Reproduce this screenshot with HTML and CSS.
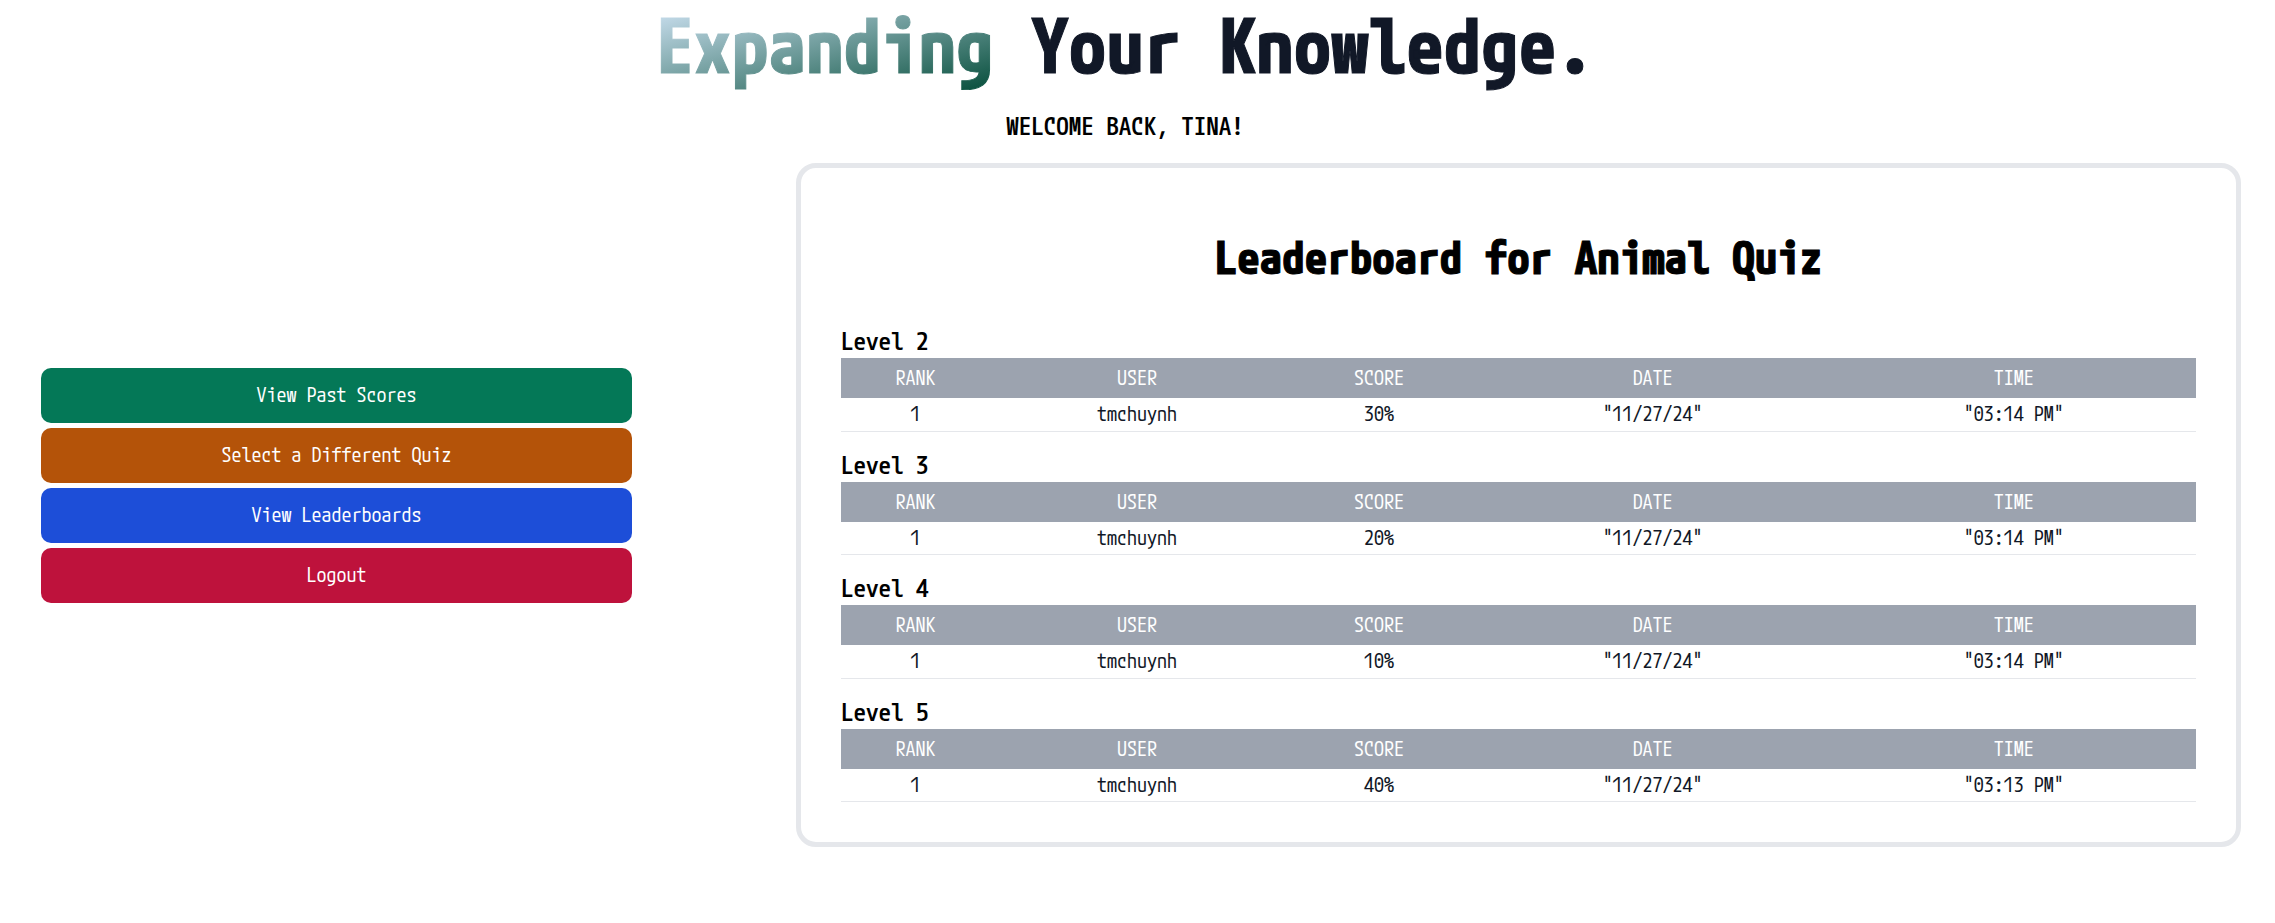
FILE: index.html
```
<!DOCTYPE html>
<html lang="en">
<head>
<meta charset="utf-8">
<title>Leaderboard</title>
<link rel="stylesheet" href="styles.css">
</head>
<body>
<header class="header">
  <h1 class="headline"><span class="accent">Expanding</span> Your Knowledge.</h1>
  <p class="welcome">WELCOME BACK, TINA!</p>
</header>
<main class="content">
  <nav class="menu" aria-label="Quiz menu">
    <button type="button" class="btn green">View Past Scores</button>
    <button type="button" class="btn orange">Select a Different Quiz</button>
    <button type="button" class="btn blue">View Leaderboards</button>
    <button type="button" class="btn red">Logout</button>
  </nav>
  <section class="card">
    <h2 class="title">Leaderboard for Animal Quiz</h2>
    <table class="scores">
      <caption>Level 2</caption>
      <thead><tr><th class="rank">RANK</th><th class="user">USER</th><th class="score">SCORE</th><th class="date">DATE</th><th>TIME</th></tr></thead>
      <tbody><tr><td>1</td><td>tmchuynh</td><td>30%</td><td>"11/27/24"</td><td>"03:14 PM"</td></tr></tbody>
    </table>
    <table class="scores">
      <caption>Level 3</caption>
      <thead><tr><th class="rank">RANK</th><th class="user">USER</th><th class="score">SCORE</th><th class="date">DATE</th><th>TIME</th></tr></thead>
      <tbody><tr><td>1</td><td>tmchuynh</td><td>20%</td><td>"11/27/24"</td><td>"03:14 PM"</td></tr></tbody>
    </table>
    <table class="scores">
      <caption>Level 4</caption>
      <thead><tr><th class="rank">RANK</th><th class="user">USER</th><th class="score">SCORE</th><th class="date">DATE</th><th>TIME</th></tr></thead>
      <tbody><tr><td>1</td><td>tmchuynh</td><td>10%</td><td>"11/27/24"</td><td>"03:14 PM"</td></tr></tbody>
    </table>
    <table class="scores">
      <caption>Level 5</caption>
      <thead><tr><th class="rank">RANK</th><th class="user">USER</th><th class="score">SCORE</th><th class="date">DATE</th><th>TIME</th></tr></thead>
      <tbody><tr><td>1</td><td>tmchuynh</td><td>40%</td><td>"11/27/24"</td><td>"03:13 PM"</td></tr></tbody>
    </table>
  </section>
</main>
</body>
</html>
```
FILE: styles.css
```
* { box-sizing: border-box; margin: 0; }
body {
  padding: 0 25px 0 0;
  background: #fff;
  color: #000;
  font-family: "M PLUS 1 Code", "Noto Sans Mono CJK JP", "Noto Sans Mono CJK SC", "Liberation Mono", monospace;
  font-size: 20px;
  line-height: 30px;
}
.header { text-align: center; }
.headline {
  font-size: 75px;
  line-height: 90px;
  font-weight: 800;
  color: #111827;
  -webkit-text-stroke: 1px #111827;
}
.accent {
  display: inline-block;
  background: linear-gradient(to bottom right, #d6e8fa, #064e3b);
  -webkit-background-clip: text;
  background-clip: text;
  color: transparent;
  -webkit-text-stroke-color: transparent;
}
.welcome { font-size: 25px; line-height: 35px; padding: 18px 0 20px; font-weight: 500; }
.content {
  display: grid;
  grid-template-columns: 591fr 1445fr;
  gap: 164px;
  align-items: center;
  padding: 0 9px 40px 41px;
}
.menu { display: flex; flex-direction: column; gap: 5px; padding-bottom: 40px; }
.btn {
  height: 55px;
  border: 0;
  border-radius: 10px;
  color: #fff;
  font: inherit;
  cursor: pointer;
}
.green { background: #047857; }
.orange { background: #b45309; }
.blue { background: #1d4ed8; }
.red { background: #be123c; }
.card { border: 5px solid #e5e7eb; border-radius: 20px; padding: 64px 40px 40px; }
.title {
  font-size: 45px;
  line-height: 50px;
  font-weight: 800;
  text-align: center;
  margin-bottom: 41px;
  -webkit-text-stroke: 1px #000;
}
.scores { width: 100%; table-layout: fixed; border-collapse: collapse; text-align: center; }
.scores + .scores { margin-top: 15px; }
.scores caption { font-size: 25px; line-height: 35px; text-align: left; font-weight: 500; }
.scores th { height: 40px; padding: 0; background: #9ca3af; color: #fff; font-weight: 400; }
.scores td { height: 33px; padding: 0; color: #111827; border-bottom: 1px solid #e5e7eb; }
.rank { width: 11%; }
.user { width: 21.7%; }
.score { width: 14%; }
.date { width: 26.4%; }
```
